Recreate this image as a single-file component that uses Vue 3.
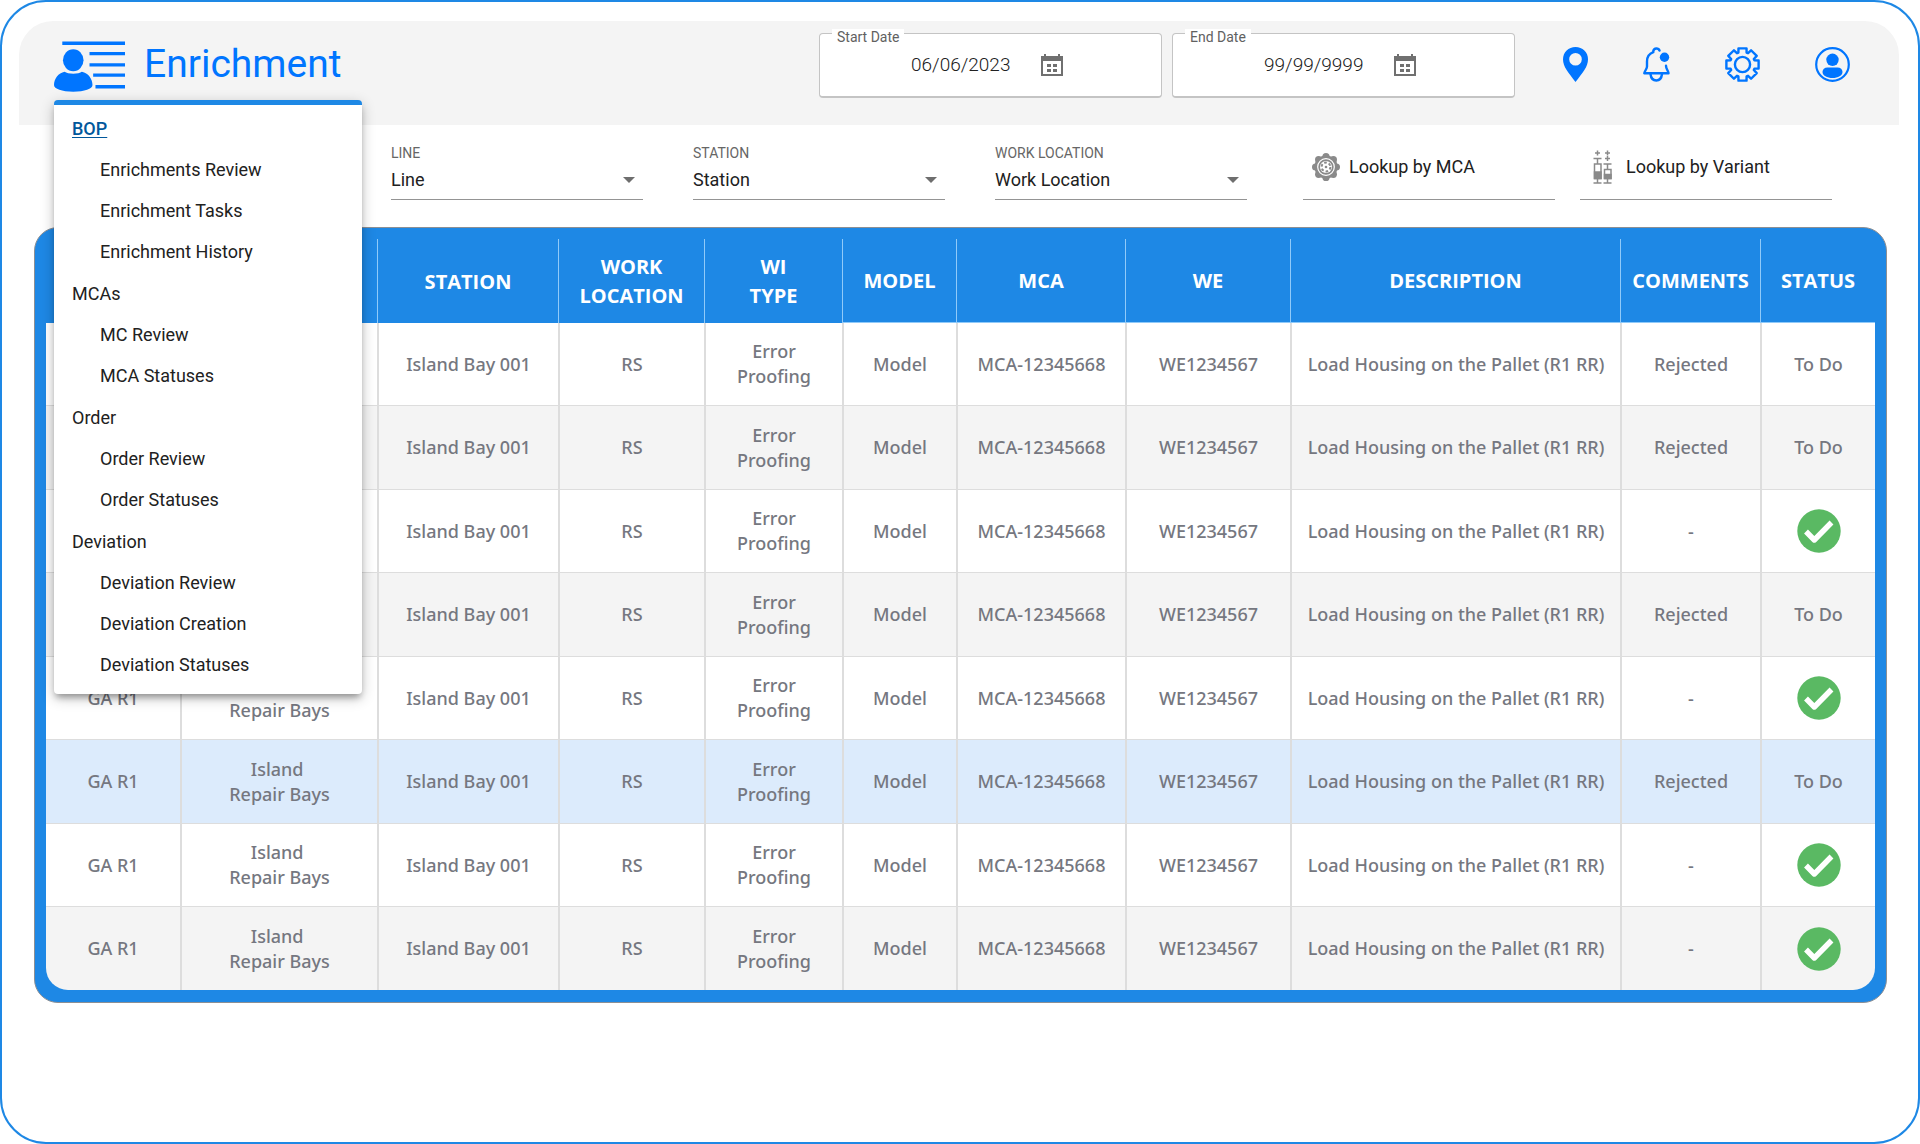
<script setup>
import { ref } from 'vue'

const menu = [
  { title: 'BOP', active: true, items: ['Enrichments Review', 'Enrichment Tasks', 'Enrichment History'] },
  { title: 'MCAs', items: ['MC Review', 'MCA Statuses'] },
  { title: 'Order', items: ['Order Review', 'Order Statuses'] },
  { title: 'Deviation', items: ['Deviation Review', 'Deviation Creation', 'Deviation Statuses'] },
]

const dates = ref([
  { id: 'start-date', label: 'Start Date', value: '06/06/2023' },
  { id: 'end-date', label: 'End Date', value: '99/99/9999' },
])

const filters = [
  { id: 'line', label: 'LINE', value: 'Line' },
  { id: 'station', label: 'STATION', value: 'Station' },
  { id: 'work-location', label: 'WORK LOCATION', value: 'Work Location' },
]

const columns = [
  { name: 'AREA', width: 134 },
  { name: 'LINE', width: 197 },
  { name: 'STATION', width: 181 },
  { name: 'WORK\nLOCATION', width: 146 },
  { name: 'WI\nTYPE', width: 138 },
  { name: 'MODEL', width: 114, ruled: true },
  { name: 'MCA', width: 169, ruled: true },
  { name: 'WE', width: 165, ruled: true },
  { name: 'DESCRIPTION', width: 330, ruled: true },
  { name: 'COMMENTS', width: 140, ruled: true },
  { name: 'STATUS', width: 115, ruled: true },
]

const cells = [
  'GA R1',
  'Island\u00a0\nRepair Bays',
  'Island Bay 001',
  'RS',
  'Error\nProofing',
  'Model',
  'MCA-12345668',
  'WE1234567',
  'Load Housing on the Pallet (R1 RR)',
]

const rows = [false, false, true, false, true, false, true, true].map((done, i) => ({
  done,
  selected: i === 5,
}))

// Outline of an eight-toothed gear centred on (cx, cy).
function gearPath(cx, cy, outer, inner) {
  const points = []
  for (let i = 0; i < 8; i++) {
    const steps = [[-19, inner], [-14, outer], [14, outer], [19, inner]]
    for (const [offset, r] of steps) {
      const a = ((i * 45 + offset) * Math.PI) / 180
      points.push(`${(cx + r * Math.sin(a)).toFixed(2)} ${(cy - r * Math.cos(a)).toFixed(2)}`)
    }
  }
  return `M${points.join('L')}Z`
}
const gear = gearPath(17.5, 17.5, 16.6, 12.6)

const petals = Array.from({ length: 8 }, (_, i) => {
  const a = (i * Math.PI) / 4
  return { x: 14 + 10.4 * Math.sin(a), y: 14 - 10.4 * Math.cos(a) }
})
</script>

<template>
  <div class="frame">
    <header class="header">
      <div class="brand">
        <svg class="logo" viewBox="0 0 214 152" fill="currentColor" aria-hidden="true">
          <path d="M25 1h189v10H25zM107 32h107v10H107zM107 66h107v10H107zM118 97h96v10H118zM125 132h89v10H125z" />
          <ellipse cx="58" cy="57" rx="31" ry="33" />
          <path d="M32 92C41 100 75 100 84 92C103 96 116 113 116 132C116 144 92 152 58 152S0 144 0 132C0 113 13 96 32 92Z" />
        </svg>
        <h1 class="title">Enrichment</h1>
        <nav class="menu" aria-label="Sections">
          <ul v-for="group in menu" :key="group.title" class="group">
            <li><a href="#" class="group-title" :class="{ active: group.active }">{{ group.title }}</a></li>
            <li v-for="item in group.items" :key="item"><a href="#" class="item">{{ item }}</a></li>
          </ul>
        </nav>
      </div>

      <div class="dates">
        <div v-for="d in dates" :key="d.id" class="date">
          <label :for="d.id">{{ d.label }}</label>
          <input :id="d.id" v-model="d.value" type="text">
          <button type="button" class="calendar" :aria-label="'Pick ' + d.label">
            <svg width="22" height="22" viewBox="0 0 22 22" fill="currentColor" aria-hidden="true">
              <path fill-rule="evenodd" d="M3 0h2v2h12V0h2v2h3v20H0V2h3zM2 7v13h18V7z" />
              <path d="M6 10h4v3H6zM12 10h4v3h-4zM6 15h4v3H6zM12 15h4v3h-4z" />
            </svg>
          </button>
        </div>
      </div>

      <div class="actions">
        <button type="button" aria-label="Location">
          <svg width="25" height="35" viewBox="0 0 25 35" fill="currentColor">
            <path fill-rule="evenodd" d="M12.5 0C5.5 0 0 5.2 0 12.2C0 20 5.5 25.5 12.5 35C19.5 25.5 25 20 25 12.2C25 5.2 19.5 0 12.5 0ZM12.5 6a6.3 6.3 0 1 1 0 12.6a6.3 6.3 0 1 1 0-12.6Z" />
          </svg>
        </button>
        <button type="button" aria-label="Notifications">
          <svg width="27" height="35" viewBox="0 0 27 35" fill="none" stroke="currentColor" stroke-width="2.4" stroke-linecap="round" stroke-linejoin="round">
            <path d="M16.5 3.5C15.5 0.8 11 0.6 10.3 4V5.2C6 6.8 4 10.5 4 14.5V19.5C4 22 1.8 23.5 1.3 26.2H25.5C25.2 23.5 23 22 23 18.8" />
            <path d="M7.5 27C8 31.5 10 33.5 13.3 33.5S18.5 31.5 19 27" />
            <circle cx="21.5" cy="10.3" r="4.7" fill="currentColor" stroke="none" />
          </svg>
        </button>
        <button type="button" aria-label="Settings">
          <svg width="35" height="35" viewBox="0 0 35 35" fill="none" stroke="currentColor" stroke-width="2.4" stroke-linejoin="round">
            <path :d="gear" />
            <circle cx="17.5" cy="17.5" r="7.6" />
          </svg>
        </button>
        <button type="button" aria-label="Account">
          <svg width="35" height="35" viewBox="0 0 35 35" fill="currentColor">
            <circle cx="17.5" cy="17.5" r="16.3" fill="none" stroke="currentColor" stroke-width="2.2" />
            <circle cx="17.5" cy="12.8" r="6.2" />
            <path d="M12.5 20.4h10c3 0 5 1.8 5 4.6c0 3.6-4.5 6-10 6s-10-2.4-10-6c0-2.8 2-4.6 5-4.6Z" />
          </svg>
        </button>
      </div>
    </header>

    <section class="filters">
      <div v-for="f in filters" :key="f.id" class="field">
        <label :for="f.id">{{ f.label }}</label>
        <div class="select">
          <select :id="f.id"><option>{{ f.value }}</option></select>
          <svg width="12" height="6" viewBox="0 0 12 6" aria-hidden="true"><path d="M0 0h12L6 6z" fill="#6e6e6e" /></svg>
        </div>
      </div>
      <button type="button" class="lookup mca">
        <svg width="28" height="28" viewBox="0 0 28 28" aria-hidden="true">
          <g fill="#8a8a8a">
            <circle v-for="(p, i) in petals" :key="i" :cx="p.x" :cy="p.y" r="3.6" />
            <circle cx="14" cy="14" r="11.6" />
          </g>
          <circle cx="14" cy="14" r="8.3" fill="none" stroke="#fff" stroke-width="1.2" />
          <circle cx="14" cy="14" r="6" fill="#fff" />
          <circle cx="14" cy="14" r="4.4" fill="none" stroke="#8a8a8a" stroke-width="2" stroke-dasharray="2.6 2" />
          <circle cx="14" cy="14" r="1.3" fill="#8a8a8a" />
        </svg>
        Lookup by MCA
      </button>
      <button type="button" class="lookup variant">
        <svg width="20" height="34" viewBox="0 0 20 34" fill="none" stroke="#8a8a8a" stroke-width="1.5" aria-hidden="true">
          <path d="M4.5 0.5v5M2 3h5M14.5 0.5v5M12 3h5M14.5 6v5M12 8.5h5" />
          <path d="M0.5 8.5h8M4.5 8.5v5M1.5 14h6.5v14.5H1.5zM4.5 29v4M0.5 33h8" />
          <path d="M10.5 14h8M14.5 14v5M11.5 19.5H18v9H11.5zM14.5 29v4M10.5 33h8" />
          <path d="M1.5 22H8v6.5H1.5zM11.5 24.5H18v4H11.5z" fill="#8a8a8a" />
        </svg>
        Lookup by Variant
      </button>
    </section>

    <main class="panel">
      <div class="clip">
        <table>
          <colgroup><col v-for="c in columns" :key="c.name" :style="{ width: c.width + 'px' }"></colgroup>
          <thead>
            <tr><th v-for="c in columns" :key="c.name" scope="col" :class="{ ruled: c.ruled }">{{ c.name }}</th></tr>
          </thead>
          <tbody>
            <tr v-for="(row, i) in rows" :key="i" :class="{ selected: row.selected }">
              <td v-for="cell in cells" :key="cell">{{ cell }}</td>
              <td>{{ row.done ? '-' : 'Rejected' }}</td>
              <td>
                <svg v-if="row.done" class="check" width="44" height="44" viewBox="0 0 44 44" role="img" aria-label="Done">
                  <circle cx="22" cy="22" r="21.7" fill="#5ab963" />
                  <path d="M9 22.5L17.3 31L34.5 13.5" fill="none" stroke="#fff" stroke-width="5.4" stroke-linejoin="round" />
                </svg>
                <template v-else>To Do</template>
              </td>
            </tr>
          </tbody>
        </table>
      </div>
    </main>
  </div>
</template>

<style>
body {
  background: #fff;
}
</style>

<style scoped>
* {
  box-sizing: border-box;
}
.frame {
  min-height: 100vh;
  padding: 19px 19px 0 17px;
  border: 2px solid #1e88e5;
  border-radius: 46px;
  font-family: Roboto, sans-serif;
  color: #212121;
}
button {
  padding: 0;
  border: 0;
  background: none;
  font: inherit;
  color: inherit;
}
svg {
  display: block;
  flex: none;
}
.header {
  display: flex;
  align-items: flex-start;
  height: 104px;
  padding: 0 49px 0 35px;
  border-radius: 34px 34px 0 0;
  background: #f4f4f4;
}
.brand {
  position: relative;
  display: flex;
  gap: 19px;
  margin-right: auto;
  padding-top: 20px;
  color: #0075ff;
}
.logo {
  width: 71px;
  height: 51px;
}
.title {
  margin: 0;
  font-size: 39px;
  font-weight: 400;
  line-height: 47px;
}
.menu {
  position: absolute;
  z-index: 1;
  top: 79px;
  left: 0;
  display: flex;
  flex-direction: column;
  gap: 1px;
  width: 308px;
  padding: 3px 0 9px;
  border-top: 5px solid #1e88e5;
  border-radius: 4px;
  background: #fff;
  box-shadow: 0 5px 6px -2px rgba(0, 0, 0, 0.3), 0 4px 14px rgba(0, 0, 0, 0.24);
}
.group {
  margin: 0;
  padding: 0;
  list-style: none;
}
.group a {
  display: block;
  padding-left: 46px;
  font-size: 18px;
  line-height: 41px;
  color: #212121;
  text-decoration: none;
}
.group .group-title {
  padding-left: 18px;
}
.group .active {
  font-weight: 500;
  color: #01579b;
  text-decoration: underline;
  text-decoration-thickness: 1px;
  text-underline-offset: 2px;
}
.dates {
  display: flex;
  gap: 10px;
  padding-top: 12px;
}
.date {
  position: relative;
  display: flex;
  align-items: center;
  width: 343px;
  height: 65px;
  padding-left: 91px;
  border: 1px solid #c4c4c4;
  border-bottom-width: 2px;
  border-radius: 4px;
  background: #fff;
}
.date label {
  position: absolute;
  top: -5px;
  left: 12px;
  padding: 0 5px;
  background: #fff;
  font-size: 14px;
  line-height: 17px;
  color: #616161;
}
.date input {
  width: 130px;
  padding: 0;
  border: 0;
  outline: 0;
  background: none;
  font: 300 19px/24px Roboto, sans-serif;
  color: #212121;
}
.calendar {
  color: #707070;
}
.actions {
  display: flex;
  gap: 55px;
  margin-left: 48px;
  padding-top: 26px;
  color: #0075ff;
}
.filters {
  display: flex;
  height: 75px;
  padding-left: 372px;
}
.field,
.lookup {
  width: 252px;
  border-bottom: 1px solid #949494;
}
.field {
  margin-right: 50px;
  padding-top: 19px;
}
.field label {
  display: block;
  font-size: 14px;
  line-height: 18px;
  color: #666;
}
.select {
  display: flex;
  align-items: center;
  margin-top: 6px;
}
.select select {
  flex: 1;
  min-width: 0;
  height: 24px;
  margin-right: -12px;
  padding: 0;
  border: 0;
  appearance: none;
  background: none;
  font: 400 18px/24px Roboto, sans-serif;
  color: #212121;
}
.select svg {
  margin-right: 8px;
}
.lookup {
  display: flex;
  align-items: center;
  padding-top: 9px;
  font-size: 18px;
}
.mca {
  margin-left: 6px;
  padding-left: 9px;
  gap: 9px;
}
.variant {
  margin-left: 25px;
  padding-left: 13px;
  gap: 13px;
}
.panel {
  margin: 27px 12px 0 15px;
  padding: 11px 11px 12px;
  border: 1px solid #8c8f94;
  border-radius: 24px;
  background: #1e88e5;
}
.clip {
  overflow: hidden;
  border-radius: 0 0 22px 22px;
}
table {
  width: 100%;
  table-layout: fixed;
  border-collapse: separate;
  border-spacing: 0;
}
th,
td {
  padding: 0;
  text-align: center;
  vertical-align: middle;
  white-space: pre;
}
th {
  height: 84px;
  border-left: 1px solid #90caf9;
  font: 700 20px/29px "Open Sans", sans-serif;
  color: #fff;
}
th.ruled {
  border-bottom: 1px solid #90caf9;
}
td {
  height: 83px;
  border-left: 2px solid #ddd;
  border-bottom: 1px solid #ddd;
  background: #fff;
  font: 500 18px/25px "Noto Sans", sans-serif;
  color: #757780;
}
th:first-child,
td:first-child {
  border-left: 0;
}
tr:nth-child(even) td {
  height: 84px;
  background: #f4f4f4;
}
tr.selected:nth-child(even) td {
  background: #dcebfc;
}
tr:nth-child(even):last-child td {
  height: 83px;
  border-bottom: 0;
}
.check {
  margin: 0 auto;
}
</style>
